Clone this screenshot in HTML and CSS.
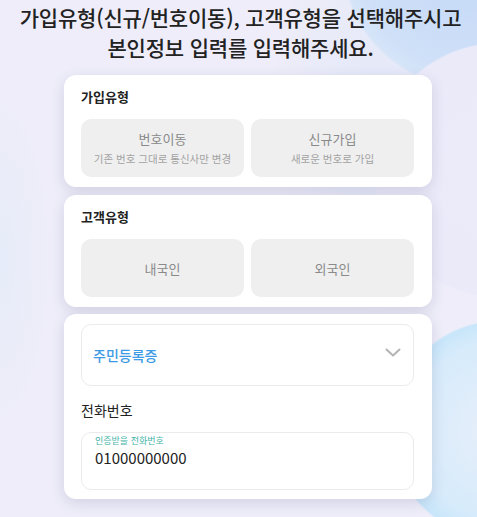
FILE: index.html
```html
<!DOCTYPE html>
<html lang="ko">
<head>
<meta charset="UTF-8">
<meta name="viewport" content="initial-scale=1, maximum-scale=1">
<title>본인정보 입력</title>
<link rel="stylesheet" href="styles.css">
</head>
<body>
    <div class="page">
        <h1 class="page-title">가입유형(신규/번호이동), 고객유형을 선택해주시고<br>본인정보 입력를 입력해주세요.</h1>

        <div class="card">
            <div class="card-label">가입유형</div>
            <div class="choice-row">
                <div class="choice">
                    <span class="choice-name">번호이동</span>
                    <span class="choice-desc">기존 번호 그대로 통신사만 변경</span>
                </div>
                <div class="choice">
                    <span class="choice-name">신규가입</span>
                    <span class="choice-desc">새로운 번호로 가입</span>
                </div>
            </div>
        </div>

        <div class="card">
            <div class="card-label">고객유형</div>
            <div class="choice-row">
                <div class="choice"><span class="choice-name">내국인</span></div>
                <div class="choice"><span class="choice-name">외국인</span></div>
            </div>
        </div>

        <div class="card card-form">
            <div class="select-box">
                <span class="select-value">주민등록증</span>
                <svg class="select-arrow" width="16" height="10" viewBox="0 0 16 10">
                    <path d="M1.5 1.5 L8 7.5 L14.5 1.5" fill="none" stroke="#b4b4b4" stroke-width="2" stroke-linecap="round" stroke-linejoin="round"/>
                </svg>
            </div>
            <div class="field-title">전화번호</div>
            <div class="input-box">
                <span class="input-label">인증받을 전화번호</span>
                <span class="input-value">01000000000</span>
            </div>
        </div>
    </div>
</body>
</html>
```

FILE: styles.css
```css
* { padding: 0; margin: 0; box-sizing: border-box; }
html, body {
    width: 100%;
    height: 100%;
}
body {
    overflow: hidden;
    font-family: "Noto Sans CJK KR", "Noto Sans", sans-serif;
    color: #222;
    background:
        radial-gradient(circle 128px at 500px 170px, #ecebf9 0, #ebeaf9 126px, transparent 128px),
        radial-gradient(circle 128px at 470px -40px, #c4d8f6 0, #cfe0f8 110px, #d6e5f8 126px, transparent 128px),
        radial-gradient(circle 110px at 500px 430px, #e8eefa 0, #d6ebfb 90px, #c8e6fa 108px, transparent 110px),
        radial-gradient(ellipse 110px 200px at 380px 120px, #e2e8f8 0, transparent 100%),
        radial-gradient(ellipse 50px 160px at 0 260px, #e6ecf9 0, transparent 100%),
        #eeedf9;
}
.page {
    padding-top: 2px;
}
.page-title {
    font-size: 21px;
    font-weight: 500;
    line-height: 30px;
    letter-spacing: -0.2px;
    text-align: center;
    color: #222;
    padding-left: 4px;
    margin-bottom: 13px;
}
.card {
    width: 368px;
    margin: 0 0 8px 64px;
    padding: 13px 18px 10px 17px;
    background: #fff;
    border-radius: 12px;
    box-shadow: 0 4px 14px rgba(70, 70, 120, 0.16);
}
.card-label {
    font-size: 13px;
    font-weight: 700;
    line-height: 18px;
    color: #222;
    margin-bottom: 13px;
}
.choice-row {
    display: flex;
    gap: 7px;
}
.choice {
    flex: 1;
    height: 58px;
    border-radius: 10px;
    background: #efefef;
    display: flex;
    flex-direction: column;
    align-items: center;
    justify-content: center;
    gap: 5px;
}
.choice-name {
    font-size: 13px;
    line-height: 17px;
    color: #8a8a8a;
}
.choice-desc {
    font-size: 10.5px;
    line-height: 14px;
    color: #a2a2a2;
}
.card-form {
    margin-top: -1px;
    padding-top: 10px;
    padding-bottom: 9px;
}
.select-box {
    height: 62px;
    border: 1px solid #ebebeb;
    border-radius: 10px;
    padding: 0 12px 0 11px;
    display: flex;
    align-items: center;
    justify-content: space-between;
}
.select-value {
    font-size: 14px;
    font-weight: 500;
    color: #3d9be6;
}
.select-arrow {
    margin-bottom: 4px;
}
.field-title {
    font-size: 14px;
    line-height: 20px;
    color: #222;
    margin: 14px 0 12px;
}
.input-box {
    height: 58px;
    border: 1px solid #ebebeb;
    border-radius: 10px;
    padding: 2px 13px 0;
    display: flex;
    flex-direction: column;
}
.input-label {
    font-size: 9px;
    line-height: 12px;
    color: #3fb3a8;
}
.input-value {
    font-size: 15px;
    line-height: 22px;
    color: #222;
}
```
